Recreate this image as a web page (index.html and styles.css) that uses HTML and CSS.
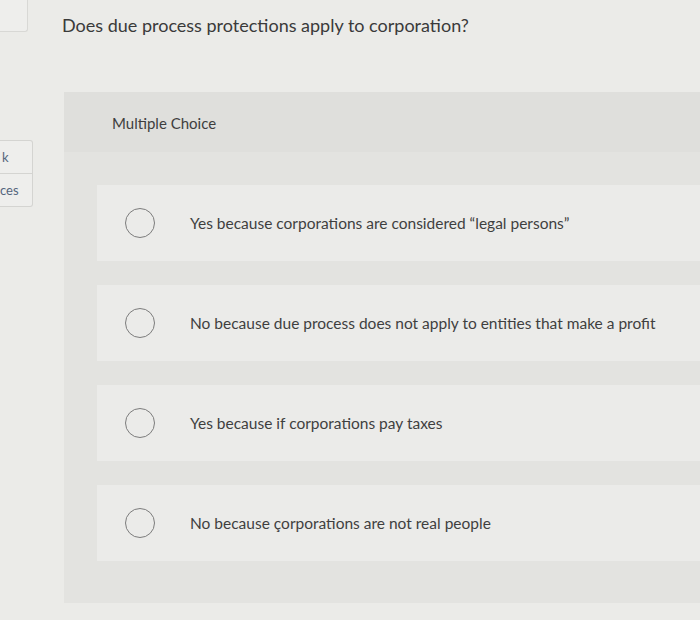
FILE: index.html
```html
<!DOCTYPE html>
<html lang="en">
<head>
  <meta charset="UTF-8">
  <title>Question</title>
  <link rel="stylesheet" href="styles.css">
</head>
<body>
  <div class="page">
    <aside class="rail">
      <div class="rail-top"></div>
      <div class="rail-links">
        <a class="rail-link rail-link-first">k</a>
        <a class="rail-link">ces</a>
      </div>
    </aside>

    <main class="question">
      <h1 class="prompt">Does due process protections apply to corporation?</h1>

      <section class="panel">
        <div class="panel-head">Multiple Choice</div>

        <div class="choices">
          <label class="choice">
            <span class="radio"></span>
            <span class="choice-text">Yes because corporations are considered “legal persons”</span>
          </label>
          <label class="choice">
            <span class="radio"></span>
            <span class="choice-text">No because due process does not apply to entities that make a profit</span>
          </label>
          <label class="choice">
            <span class="radio"></span>
            <span class="choice-text">Yes because if corporations pay taxes</span>
          </label>
          <label class="choice">
            <span class="radio"></span>
            <span class="choice-text">No because çorporations are not real people</span>
          </label>
        </div>
      </section>
    </main>
  </div>
</body>
</html>
```

FILE: styles.css
```css
body {
  margin: 0;
  background: #ebebe8;
  font-family: Lato, 'Noto Sans', sans-serif;
  color: #3b3b3b;
  overflow: hidden;
}
.page {
  display: flex;
  width: 700px;
  height: 620px;
}
.rail {
  flex: none;
  width: 62px;
}
.rail-top {
  width: 28px;
  height: 32px;
  box-sizing: border-box;
  border-right: 1px solid #d8d8d5;
  border-bottom: 1px solid #d8d8d5;
  border-bottom-right-radius: 3px;
  background: #eeeeec;
}
.rail-links {
  margin-top: 108px;
  width: 33px;
  box-sizing: border-box;
  border: 1px solid #d4d4d1;
  border-left: none;
  border-radius: 0 3px 3px 0;
  background: #eeeeec;
}
.rail-link {
  display: block;
  height: 32px;
  line-height: 32px;
  font-size: 13px;
  color: #55657c;
}
.rail-link-first {
  padding-left: 2px;
}
.rail-link + .rail-link {
  border-top: 1px solid #d4d4d1;
}
.question {
  flex: 1;
  min-width: 0;
}
.prompt {
  margin: 0;
  padding-top: 13px;
  font-size: 18px;
  font-weight: 400;
  line-height: 24px;
  color: #3a3a3a;
}
.panel {
  margin-top: 55px;
  margin-left: 2px;
  background: #e3e3e0;
  padding-bottom: 42px;
}
.panel-head {
  height: 60px;
  padding: 21px 0 0 48px;
  box-sizing: border-box;
  background: #dfdfdc;
  font-size: 15px;
  line-height: 20px;
  color: #3e3e3e;
}
.choices {
  display: flex;
  flex-direction: column;
  gap: 24px;
  padding: 33px 0 0 33px;
}
.choice {
  display: flex;
  align-items: center;
  gap: 35px;
  height: 76px;
  padding-left: 28px;
  background: #ebebe9;
}
.radio {
  flex: none;
  width: 30px;
  height: 30px;
  box-sizing: border-box;
  border: 1.5px solid #7c7c7c;
  border-radius: 50%;
}
.choice-text {
  font-size: 15.5px;
  color: #3f3f3f;
}
```
